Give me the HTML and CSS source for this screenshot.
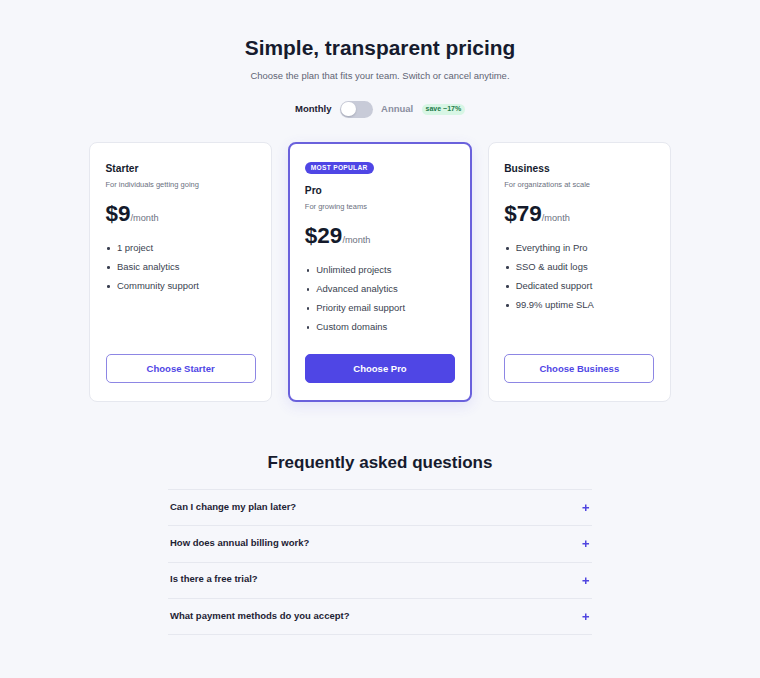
FILE: index.html
```html
<!DOCTYPE html>
<html lang="en">
<head>
<meta charset="utf-8">
<title>Pricing</title>
<link rel="stylesheet" href="styles.css">
</head>
<body>
<main class="page">
  <h1 class="title">Simple, transparent pricing</h1>
  <p class="lead">Choose the plan that fits your team. Switch or cancel anytime.</p>

  <div class="billing">
    <span class="billing-label is-active">Monthly</span>
    <span class="switch"><span class="knob"></span></span>
    <span class="billing-label">Annual</span>
    <span class="save">save ~17%</span>
  </div>

  <section class="plans">
    <article class="card">
      <h3 class="plan-name">Starter</h3>
      <p class="plan-desc">For individuals getting going</p>
      <div class="price"><span class="amount">$9</span><span class="per">/month</span></div>
      <ul class="features">
        <li>1 project</li>
        <li>Basic analytics</li>
        <li>Community support</li>
      </ul>
      <button class="btn btn-outline">Choose Starter</button>
    </article>

    <article class="card card-featured">
      <span class="badge">MOST POPULAR</span>
      <h3 class="plan-name">Pro</h3>
      <p class="plan-desc">For growing teams</p>
      <div class="price"><span class="amount">$29</span><span class="per">/month</span></div>
      <ul class="features">
        <li>Unlimited projects</li>
        <li>Advanced analytics</li>
        <li>Priority email support</li>
        <li>Custom domains</li>
      </ul>
      <button class="btn btn-primary">Choose Pro</button>
    </article>

    <article class="card">
      <h3 class="plan-name">Business</h3>
      <p class="plan-desc">For organizations at scale</p>
      <div class="price"><span class="amount">$79</span><span class="per">/month</span></div>
      <ul class="features">
        <li>Everything in Pro</li>
        <li>SSO &amp; audit logs</li>
        <li>Dedicated support</li>
        <li>99.9% uptime SLA</li>
      </ul>
      <button class="btn btn-outline">Choose Business</button>
    </article>
  </section>

  <section class="faq">
    <h2 class="faq-title">Frequently asked questions</h2>
    <div class="faq-list">
      <div class="faq-item"><span class="q">Can I change my plan later?</span><svg class="plus" width="8" height="8" viewBox="0 0 8 8"><path d="M4 0.5V7.5M0.5 4H7.5" stroke="#5046e0" stroke-width="1.6" fill="none"/></svg></div>
      <div class="faq-item"><span class="q">How does annual billing work?</span><svg class="plus" width="8" height="8" viewBox="0 0 8 8"><path d="M4 0.5V7.5M0.5 4H7.5" stroke="#5046e0" stroke-width="1.6" fill="none"/></svg></div>
      <div class="faq-item"><span class="q">Is there a free trial?</span><svg class="plus" width="8" height="8" viewBox="0 0 8 8"><path d="M4 0.5V7.5M0.5 4H7.5" stroke="#5046e0" stroke-width="1.6" fill="none"/></svg></div>
      <div class="faq-item"><span class="q">What payment methods do you accept?</span><svg class="plus" width="8" height="8" viewBox="0 0 8 8"><path d="M4 0.5V7.5M0.5 4H7.5" stroke="#5046e0" stroke-width="1.6" fill="none"/></svg></div>
    </div>
  </section>
</main>
</body>
</html>
```

FILE: styles.css
```css
* { box-sizing: border-box; }

html, body {
  margin: 0;
  background: #f6f7fb;
  font-family: "Liberation Sans", Arial, sans-serif;
  color: #161b2e;
}

.page {
  padding-top: 35.3px;
  display: flex;
  flex-direction: column;
  align-items: center;
}

.title {
  margin: 0;
  font-size: 20.9px;
  line-height: 26px;
  font-weight: 700;
  color: #161b2e;
}

.lead {
  margin: 7.9px 0 0;
  font-size: 9.46px;
  line-height: 14px;
  color: #5f6474;
}

.billing {
  margin-top: 17.5px;
  height: 17px;
  display: flex;
  align-items: center;
  gap: 8.5px;
}

.billing-label {
  font-size: 9.5px;
  line-height: 14px;
  font-weight: 700;
  color: #8a8ea0;
}
.billing-label.is-active { color: #1b2031; }

.switch {
  width: 32.6px;
  height: 17px;
  border-radius: 9px;
  background: #c8cbd8;
  padding: 1.35px;
  display: flex;
  align-items: center;
}
.knob {
  width: 14.3px;
  height: 14.3px;
  border-radius: 50%;
  background: #fff;
  box-shadow: 0 1px 2px rgba(20, 25, 45, 0.2);
}

.save {
  height: 10.7px;
  line-height: 10.7px;
  padding: 0 3.8px;
  border-radius: 6px;
  background: #d8f6e5;
  color: #1c7a4a;
  font-size: 7px;
  font-weight: 700;
}

.plans {
  margin-top: 24.6px;
  width: 582px;
  display: grid;
  grid-template-columns: repeat(3, 1fr);
  gap: 16px;
}

.card {
  background: #fff;
  border: 1px solid #e6e8ef;
  border-radius: 8px;
  padding: 17.5px 15.5px 18px;
  display: flex;
  flex-direction: column;
}
.card-featured {
  border: 2px solid #6a61dc;
  padding: 17.5px 14.5px 17px;
  box-shadow: 0 4px 14px rgba(79, 70, 229, 0.12);
}

.badge {
  align-self: flex-start;
  height: 12.3px;
  line-height: 12.3px;
  padding: 0 6px;
  border-radius: 999px;
  background: #4f46e5;
  color: #fff;
  font-size: 6.6px;
  font-weight: 700;
  letter-spacing: 0.3px;
  margin-bottom: 8.5px;
}

.plan-name {
  margin: 0 0 2px;
  font-size: 10.23px;
  line-height: 16px;
  font-weight: 700;
  color: #161b2e;
}

.plan-desc {
  margin: 0;
  font-size: 7.5px;
  line-height: 12px;
  color: #6b7080;
}

.price {
  margin-top: 12.25px;
  display: flex;
  align-items: baseline;
  line-height: 1;
}
.amount {
  font-size: 22.5px;
  line-height: 22.5px;
  font-weight: 700;
  color: #141a2b;
}
.per {
  font-size: 9.2px;
  color: #6b7080;
}

.features {
  list-style: none;
  margin: 12.5px 0 17.8px;
  padding: 0;
  font-size: 9.46px;
  line-height: 19px;
  color: #3a3f50;
}
.features li {
  display: flex;
  align-items: center;
}
.features li::before {
  content: "";
  flex: none;
  width: 2.7px;
  height: 2.7px;
  border-radius: 50%;
  background: currentColor;
  margin: 2.5px 6.9px 0 1.9px;
}

.btn {
  margin-top: auto;
  height: 29.4px;
  border-radius: 5px;
  font-family: inherit;
  font-size: 9.5px;
  font-weight: 700;
  display: flex;
  align-items: center;
  justify-content: center;
  cursor: pointer;
}
.btn-outline {
  background: #fff;
  border: 1px solid #8d86e4;
  color: #4f46e5;
}
.btn-primary {
  background: #4f46e5;
  border: 1px solid #4f46e5;
  color: #fff;
}

.faq {
  margin-top: 49.7px;
  width: 424px;
}
.faq-title {
  margin: 0 0 15.2px;
  text-align: center;
  font-size: 17px;
  line-height: 22px;
  font-weight: 700;
  color: #161b2e;
}
.faq-list {
  border-top: 1px solid #e6e8ef;
}
.faq-item {
  height: 36.4px;
  border-bottom: 1px solid #e6e8ef;
  padding: 0 2.5px 0 2px;
  display: flex;
  align-items: center;
  justify-content: space-between;
}
.q {
  font-size: 9.5px;
  line-height: 14px;
  font-weight: 700;
  color: #1d2233;
  margin-bottom: 2px;
}
.plus { display: block; width: 7.5px; height: 7.5px; }
```
